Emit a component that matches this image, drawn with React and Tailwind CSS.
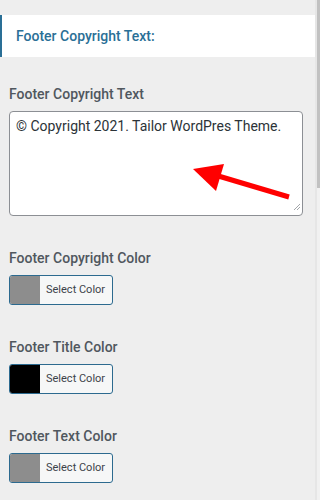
import React from "react";

function ColorField({ label, swatch }) {
  return (
    <div className="mt-[32px]">
      <div className="text-[14px] leading-[20px] font-medium text-[#50575e]">{label}</div>
      <button className="mt-[7px] flex h-[30px] w-[104px] overflow-hidden rounded-[3px] border border-[#2c6a8f] bg-[#f6f7f7] p-0">
        <span className={`h-full w-[30px] ${swatch}`}></span>
        <span className="flex h-full flex-1 items-center pl-[6px] text-[11px] text-[#3c434a]">Select Color</span>
      </button>
    </div>
  );
}

export default function App() {
  return (
    <div className="flex h-[500px] w-[320px] bg-[#eeeeee]" style={{ fontFamily: "Roboto, 'Liberation Sans', sans-serif" }}>
      <div className="flex-1 pt-[15px]">
        <div className="flex h-[42px] items-center border-l-2 border-[#2a6f96] bg-white pl-[14px] text-[14px] font-medium text-[#2a6f96]">
          Footer Copyright Text:
        </div>
        <div className="px-[9px]">
          <div className="mt-[27px] text-[14px] leading-[20px] font-medium text-[#50575e]">Footer Copyright Text</div>
          <div className="relative mt-[7px] h-[105px] w-[294px] rounded-[4px] border border-[#8c8f94] bg-white px-[6px] pt-[4px] text-[14px] leading-[20px] text-[#2c3338]">
            © Copyright 2021. Tailor WordPres Theme.
            <svg className="absolute left-0 top-0" width="294" height="105" viewBox="0 0 294 105">
              <line x1="279" y1="85" x2="205" y2="63" stroke="#ff0000" strokeWidth="5" />
              <polygon points="183,57 214,52 206,79" fill="#ff0000" />
              <path d="M284 98 L290 92 M287 98 L290 95" stroke="#8c8f94" strokeWidth="0.8" />
            </svg>
          </div>
          <ColorField label="Footer Copyright Color" swatch="bg-[#8d8d8d]" />
          <ColorField label="Footer Title Color" swatch="bg-black" />
          <ColorField label="Footer Text Color" swatch="bg-[#8d8d8d]" />
        </div>
      </div>
      <div className="flex w-[5px] flex-col border-l-2 border-[#e6e6e6]">
        <div className="h-[188px] bg-[#c1c1c1]"></div>
        <div className="flex-1 bg-[#f1f1f1]"></div>
      </div>
    </div>
  );
}
